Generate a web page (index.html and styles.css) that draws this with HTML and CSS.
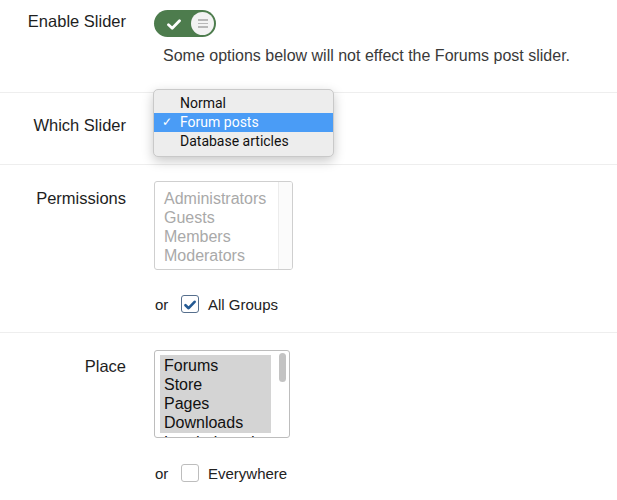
FILE: index.html
```html
<!DOCTYPE html>
<html>
<head>
<meta charset="utf-8">
<link rel="stylesheet" href="styles.css">
</head>
<body>
<div class="form">
  <div class="row row-enable">
    <div class="label">Enable Slider</div>
    <div class="control">
      <div class="toggle">
        <svg class="toggle-check" width="14" height="11" viewBox="0 0 14 11"><path d="M1.5 5.8 L5.2 9.2 L12.5 1.8" fill="none" stroke="#fff" stroke-width="2.8" stroke-linecap="round" stroke-linejoin="round"/></svg>
        <div class="knob"><span></span><span></span><span></span></div>
      </div>
      <div class="hint">Some options below will not effect the Forums post slider.</div>
    </div>
  </div>

  <div class="row row-which">
    <div class="label">Which Slider</div>
    <div class="menu">
      <div class="menu-item">Normal</div>
      <div class="menu-item selected"><span class="menu-check">✓</span>Forum posts</div>
      <div class="menu-item">Database articles</div>
    </div>
  </div>

  <div class="row row-perm">
    <div class="label">Permissions</div>
    <div class="control">
      <div class="listbox perm-box">
        <div class="perm-list">
          <div class="opt">Administrators</div>
          <div class="opt">Guests</div>
          <div class="opt">Members</div>
          <div class="opt">Moderators</div>
        </div>
        <div class="perm-track"></div>
      </div>
      <div class="or-line">
        <span class="or">or</span>
        <span class="checkbox checked">
          <svg width="12" height="10" viewBox="0 0 12 10"><path d="M1.5 5.2 L4.6 8.2 L10.6 1.8" fill="none" stroke="#245a93" stroke-width="2.6" stroke-linecap="round" stroke-linejoin="round"/></svg>
        </span>
        <span class="cb-label">All Groups</span>
      </div>
    </div>
  </div>

  <div class="row row-place">
    <div class="label">Place</div>
    <div class="control">
      <div class="listbox place-box">
        <div class="place-list">
          <div class="sel-block">
            <div class="opt">Forums</div>
            <div class="opt">Store</div>
            <div class="opt">Pages</div>
            <div class="opt">Downloads</div>
          </div>
          <div class="opt">Leaderboards</div>
        </div>
        <div class="place-thumb"></div>
      </div>
      <div class="or-line">
        <span class="or">or</span>
        <span class="checkbox"></span>
        <span class="cb-label">Everywhere</span>
      </div>
    </div>
  </div>
</div>
</body>
</html>
```

FILE: styles.css
```css
html, body {
  margin: 0;
  padding: 0;
  background: #fff;
}
body {
  font-family: "Liberation Sans", Arial, sans-serif;
  color: #222;
  width: 617px;
  height: 500px;
  overflow: hidden;
}
.row {
  display: flex;
  align-items: flex-start;
}
.row + .row {
  border-top: 1px solid #eeeeee;
}
.label {
  width: 126px;
  flex: none;
  text-align: right;
  font-size: 16.5px;
  line-height: 20px;
  color: #1e1e1e;
}
.control {
  margin-left: 28px;
  display: flex;
  flex-direction: column;
  align-items: flex-start;
}

/* row 1 */
.row-enable {
  padding: 10px 0 26px;
}
.row-enable .label {
  margin-top: 1px;
}
.toggle {
  width: 62px;
  height: 27px;
  border-radius: 14px;
  background: #4d7c4d;
  display: flex;
  align-items: center;
  justify-content: space-between;
  padding: 0 2px 0 13px;
  box-sizing: border-box;
}
.toggle-check {
  display: block;
  margin-top: 1px;
}
.knob {
  width: 23px;
  height: 23px;
  border-radius: 50%;
  background: #f3f3f3;
  display: flex;
  flex-direction: column;
  align-items: center;
  justify-content: center;
  gap: 2px;
}
.knob span {
  display: block;
  width: 10px;
  height: 1.5px;
  background: #b8b8b8;
}
.hint {
  margin: 9px 0 0 9px;
  font-size: 16px;
  line-height: 20px;
  color: #3a3a3a;
  white-space: nowrap;
}

/* row 2 */
.row-which {
  position: relative;
  padding: 22px 0 29px;
}
.menu {
  position: absolute;
  left: 153px;
  top: -4px;
  width: 181px;
  box-sizing: border-box;
  padding: 4px 0 5px;
  background: #ededed;
  border: 1px solid #c9c9c9;
  border-radius: 5px;
  box-shadow: 0 4px 12px rgba(0, 0, 0, 0.22);
  font-family: Roboto, "Liberation Sans", sans-serif;
  font-weight: 400;
  font-size: 14px;
}
.menu-item {
  position: relative;
  height: 19px;
  line-height: 19px;
  padding-left: 26px;
  color: #111;
}
.menu-item.selected {
  background: #4a9cf6;
  color: #fff;
}
.menu-check {
  position: absolute;
  left: 8px;
  top: 0;
  font-size: 12px;
}

/* row 3 */
.row-perm {
  padding: 16px 0 18px;
}
.row-perm .label {
  margin-top: 7px;
}
.listbox {
  box-sizing: border-box;
  border: 1px solid #cfcfcf;
  border-radius: 3px;
  display: flex;
  overflow: hidden;
  font-size: 16px;
  line-height: 19px;
}
.perm-box {
  width: 139px;
  height: 89px;
}
.perm-list {
  flex: 1;
  padding: 7px 0 0 9px;
  color: #a9a9a9;
}
.perm-track {
  width: 13px;
  border-left: 1px solid #ececec;
  background: #fbfbfb;
}
.or-line {
  display: flex;
  align-items: center;
  height: 20px;
  font-size: 15px;
  color: #222;
}
.row-perm .or-line {
  margin-top: 24px;
}
.or {
  width: 26px;
  padding-left: 1px;
}
.checkbox {
  width: 18px;
  height: 18px;
  box-sizing: border-box;
  border: 1px solid #bdbdbd;
  border-radius: 3px;
  background: #fff;
  display: flex;
  align-items: center;
  justify-content: center;
  margin-right: 9px;
}
.checkbox.checked {
  border: 1.5px solid #566f8d;
}
.checkbox svg {
  display: block;
  margin-top: 1px;
}

/* row 4 */
.row-place {
  padding: 17px 0 20px;
}
.row-place .label {
  margin-top: 6px;
}
.place-box {
  width: 136px;
  height: 88px;
  border-color: #bdbdbd;
  position: relative;
}
.place-list {
  flex: 1;
  padding: 4px 0 0 5px;
  color: #111;
}
.sel-block {
  background: #d4d4d4;
  width: 111px;
  padding: 1px 0 1px;
}
.place-list .opt {
  padding-left: 4px;
}
.sel-block .opt {
  padding-left: 4px;
}
.place-thumb {
  position: absolute;
  right: 3px;
  top: 2px;
  width: 7px;
  height: 29px;
  border-radius: 4px;
  background: #c3c3c3;
}
.row-place .or-line {
  margin-top: 25px;
}
```
